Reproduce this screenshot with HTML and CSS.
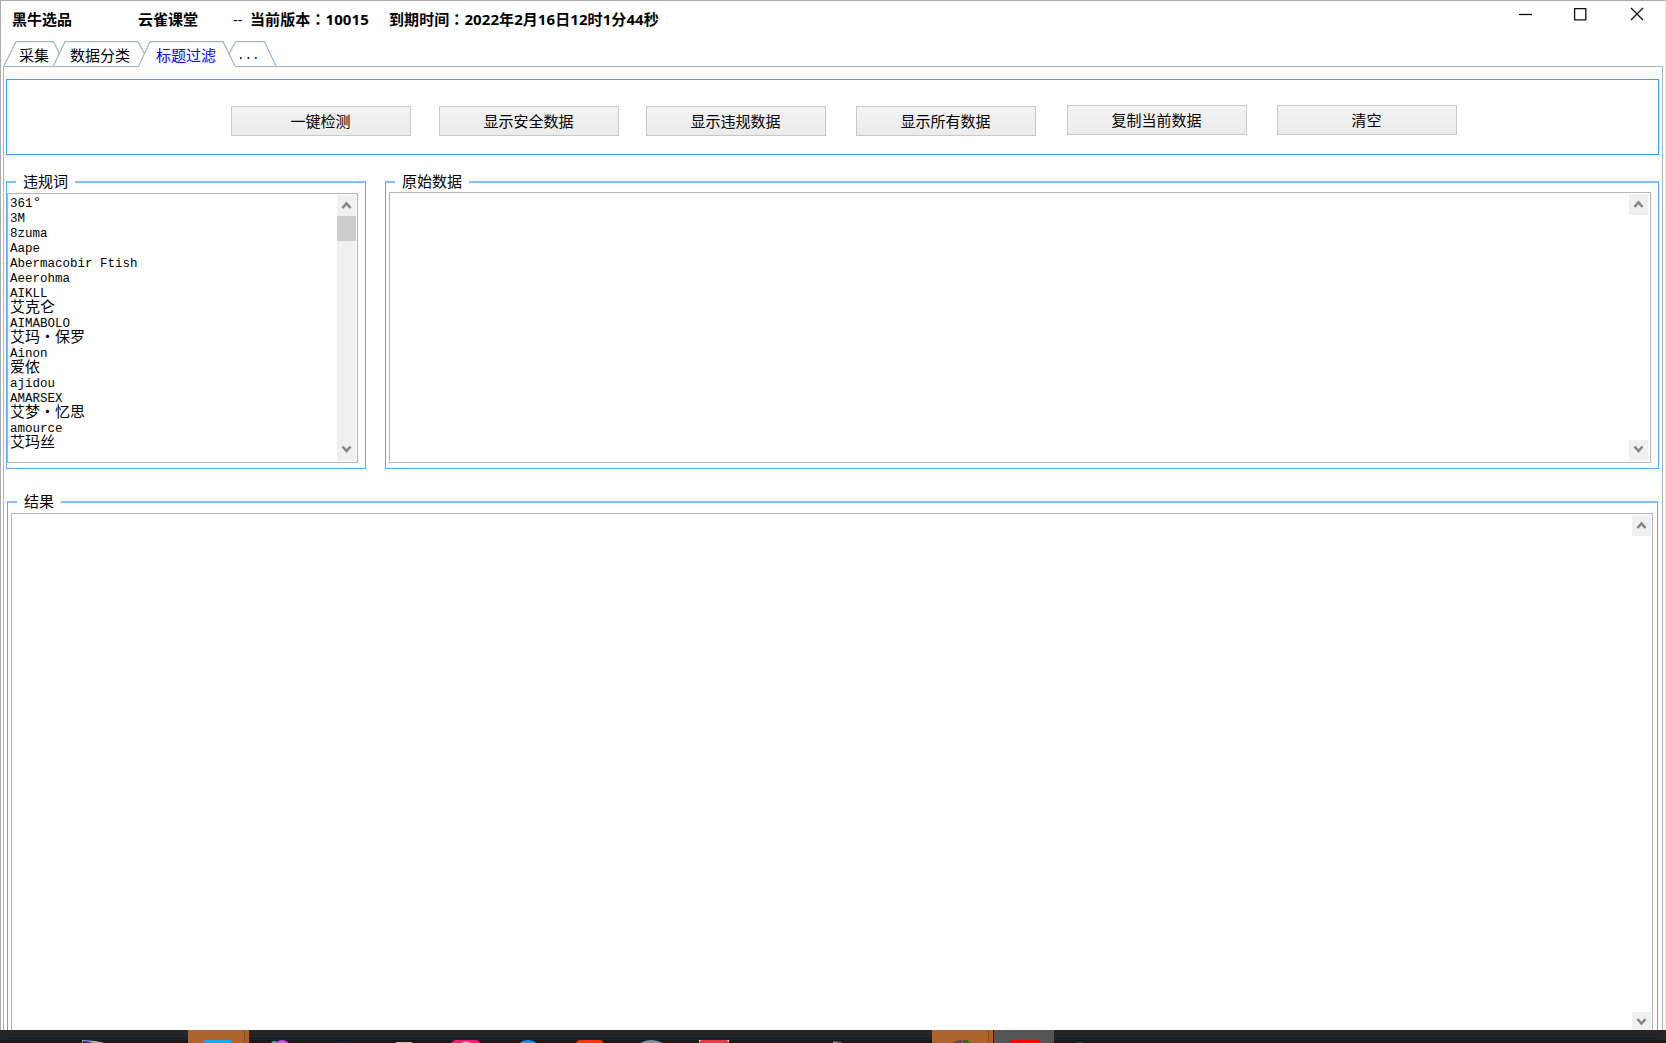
FILE: index.html
```html
<!DOCTYPE html>
<html lang="zh-CN">
<head>
  <meta charset="UTF-8">
  <title>黑牛选品</title>
  <link rel="stylesheet" href="styles.css">
</head>
<body>

  <div class="window">
    <header class="titlebar">
      <span class="app-name">黑牛选品</span>
      <span class="brand">云雀课堂</span>
      <span class="dashes">--</span>
      <span class="version">当前版本<span class="colon" lang="zh-TW">：</span>10015</span>
      <span class="expire">到期时间<span class="colon" lang="zh-TW">：</span>2022年2月16日12时1分44秒</span>
      <svg class="window-buttons" width="132" height="20" viewBox="0 0 132 20">
        <path d="M5 10.5h13" />
        <path d="M60.6 4.6h11.2v11.2H60.6z" />
        <path d="M117 4l12 12M129 4l-12 12" />
      </svg>
    </header>

    <nav class="tabs">
      <svg class="tab-shapes" width="280" height="27" viewBox="0 0 280 27">
        <path d="M3.5 27L16 1.7H53.5L59.5 14" />
        <path d="M53 27L65 1.7H138L144.500 14" />
        <path d="M3 26.5H138.500L150 1.7H223L235.500 27" />
        <path d="M229 14L235.500 1.7H264.500L276.500 27" />
        <path d="M235 26.5H280" />
      </svg>
      <a class="tab tab-collect">采集</a>
      <a class="tab tab-sort">数据分类</a>
      <a class="tab tab-filter active">标题过滤</a>
      <a class="tab tab-more">...</a>
    </nav>

    <main class="page">
      <div class="toolbar">
        <button>一键检测</button>
        <button>显示安全数据</button>
        <button>显示违规数据</button>
        <button>显示所有数据</button>
        <button class="up">复制当前数据</button>
        <button class="up">清空</button>
      </div>

      <div class="row">
        <fieldset class="words">
          <legend>违规词</legend>
          <div class="box">
            <ul>
              <li>361<span class="degree">°</span></li>
              <li>3M</li>
              <li>8zuma</li>
              <li>Aape</li>
              <li>Abermacobir Ftish</li>
              <li>Aeerohma</li>
              <li>AIKLL</li>
              <li class="zh">艾克仑</li>
              <li>AIMABOLO</li>
              <li class="zh">艾玛<span class="dot">·</span>保罗</li>
              <li>Ainon</li>
              <li class="zh">爱侬</li>
              <li>ajidou</li>
              <li>AMARSEX</li>
              <li class="zh">艾梦<span class="dot">·</span>忆思</li>
              <li>amource</li>
              <li class="zh">艾玛丝</li>
            </ul>
            <div class="scroll track">
              <svg class="arrow" viewBox="0 0 19 21"><path d="M5.500 13L9.500 8.500L13.500 13" /></svg>
              <div class="thumb"></div>
              <svg class="arrow down" viewBox="0 0 19 21"><path d="M5.500 6.500L9.500 11L13.500 6.500" /></svg>
            </div>
          </div>
        </fieldset>

        <fieldset class="source">
          <legend>原始数据</legend>
          <div class="box">
            <div class="scroll">
              <svg class="arrow" viewBox="0 0 19 21"><path d="M5.500 13L9.500 8.500L13.500 13" /></svg>
              <svg class="arrow down" viewBox="0 0 19 21"><path d="M5.500 6.500L9.500 11L13.500 6.500" /></svg>
            </div>
          </div>
        </fieldset>
      </div>

      <fieldset class="result">
        <legend>结果</legend>
        <div class="box">
          <div class="scroll">
            <svg class="arrow" viewBox="0 0 19 21"><path d="M5.500 13L9.500 8.500L13.500 13" /></svg>
            <svg class="arrow down" viewBox="0 0 19 21"><path d="M5.500 7L9.500 11.500L13.500 7" /></svg>
          </div>
        </div>
      </fieldset>
    </main>
  </div>

  <!-- top edge of the taskbar, lies over the window -->
  <footer class="taskbar">
    <svg width="1666" height="13" viewBox="0 0 1666 13">
      <path fill="#072035" d="M8 8h1650v1H8z" />
      <path fill="#1c1817" d="M0 10h1666v3H0z" />
      <path fill="#ad632a" d="M188 0h61v13h-61zM932 0h61v13h-61z" />
      <path fill="#8c4c1e" d="M244 0h1v13h-1zM988 0h1v13h-1z" />
      <path fill="#555" d="M994 0h60v13h-60z" />
      <path fill="#aaa" d="M82 10l14 1 9 2H82z" />
      <path fill="#1516b8" d="M83 11l7 1 2 1h-9z" />
      <path fill="#12aaf0" d="M203 13q0-3 3-3h23q3 0 3 3z" />
      <path fill="#28b3d4" d="M271 13l2-2h3v2z" />
      <path fill="#d850f0" d="M275 13q7-6 14 0z" />
      <path fill="#17223c" d="M332 12h18v1h-18z" />
      <path fill="#d2b5ad" d="M396 12h16v1h-16z" />
      <path fill="#fa1c70" d="M451 13q2-3 5-3h20q3 0 4 3z" />
      <path fill="#ffc5d5" d="M461 13q5-3 10 0z" />
      <path fill="#1b8fee" d="M519 13q9-6 18 0z" />
      <path fill="#f83608" d="M576 13q1-3 4-3h19q4 0 4 3z" />
      <path fill="#81939e" d="M640 13q11-6 23 0z" />
      <path fill="#e73b43" d="M699 10h30v3h-30z" />
      <path fill="#fff" d="M699 10h2l-2 2zM729 10h-2l2 2z" />
      <path fill="#261936" d="M771 12h10v1h-10z" />
      <path fill="#777" d="M833 11l8 1 1 1h-9z" />
      <path fill="#534b59" d="M953 13q3-3 9-3v3z" />
      <path fill="#316b18" d="M963 10h4l3 3h-7z" />
      <path fill="#f00" d="M1009 13q1-3 4-3h23q3 0 4 3z" />
      <path fill="#244c32" d="M1078 12h5v1h-5z" />
    </svg>
  </footer>

</body>
</html>
```

FILE: styles.css
```css
* {
  box-sizing: border-box;
}

body {
  margin: 0;
  height: 1043px;
  overflow: hidden;
  background: #fff;
  color: #000;
  font: 15px "Noto Sans CJK SC", sans-serif;
}

.window {
  height: 1043px;
  display: flex;
  flex-direction: column;
  border-top: 1px solid #aaa;
  border-left: 1px solid #aaa;
  border-right: 1px solid #e4e4e4;
}

/* title bar */
.titlebar {
  height: 39px;
  display: flex;
  padding: 7px 0 0 11px;
  font: bold 15px/22px "Open Sans", "Noto Sans CJK SC", sans-serif;
  white-space: nowrap;
}
.app-name { width: 126px; }
.brand { width: 95px; }
.dashes { width: 17px; font-weight: normal; }
.version { width: 139px; letter-spacing: 0.1px; }
.expire { letter-spacing: 0.08px; }
.colon { font-family: "Noto Sans CJK TC", sans-serif; }

.window-buttons {
  margin: -4px 19px 0 auto;
  fill: none;
  stroke: #111;
  stroke-width: 1.3;
}

/* tabs */
.tabs {
  position: relative;
  height: 27px;
  display: flex;
  padding-left: 18px;
  line-height: 30px;
}
.tab-shapes {
  position: absolute;
  left: -1px;
  top: 0;
  fill: none;
  stroke: #a3b7c2;
  stroke-width: 1.2;
}
.tab-collect { width: 51px; }
.tab-sort { width: 86px; }
.tab-filter { width: 81px; }
.tab-more {
  font-family: "Liberation Mono", monospace;
  font-size: 12.5px;
  line-height: 33px;
}
.tab.active { color: #0000ff; }

.page {
  flex: 1;
  display: flex;
  flex-direction: column;
  margin: -1px 2px 0;
  padding: 13px 3px 0 2px;
  border: 1px solid #a3b7c2;
  border-bottom: 0;
  border-top: 0;
  background: linear-gradient(#a3b7c2, #a3b7c2) 272px 0 / 100% 1px no-repeat;
}

/* toolbar */
.toolbar {
  width: 1653px;
  height: 76px;
  display: flex;
  padding: 26px 0 0 224px;
  border: 1px solid #3f9fff;
}
.toolbar button {
  width: 180px;
  height: 30px;
  padding: 0 1px 0 0;
  margin-right: 28px;
  border: 1px solid #c8c8c8;
  background: linear-gradient(#f3f3f3, #ebebeb);
  font: inherit;
  line-height: 20px;
}
.toolbar button:nth-child(2) { margin-right: 27px; }
.toolbar button:nth-child(3) { margin-right: 30px; }
.toolbar button:nth-child(4) { margin-right: 31px; }
.toolbar .up { margin-top: -1px; margin-right: 30px; }

/* group boxes */
.row {
  display: flex;
  gap: 19px;
  margin-top: 16px;
}
fieldset {
  min-width: 0;
  margin: 0;
  padding: 0;
  border: 1px solid #55aaff;
  border-top: 2px solid #7fbfff;
}
legend {
  height: 21px;
  margin-left: 9px;
  padding: 0 7px;
  line-height: 20px;
}
.words { width: 360px; height: 298px; }
.source { width: 1274px; height: 298px; }
.result { width: 1651px; height: 547px; margin: 22px 0 0 1px; }

.box {
  display: flex;
  padding: 1px;
  border: 1px solid #b5b5ba;
}
.words .box { width: 351px; height: 270px; margin-top: 1px; }
.source .box { width: 1262px; height: 271px; margin-left: 3px; }
.result .box { width: 1642px; height: 522px; margin: 1px 0 0 3px; }

ul {
  margin: -2px 0 0 1px;
  padding: 0;
  list-style: none;
}
li {
  height: 15.03px;
  font: 12.5px/23px "Liberation Mono", monospace;
  white-space: pre;
}
li.zh {
  font: 15px/16px "Noto Sans CJK SC", sans-serif;
}
.degree { font-size: 15px; line-height: 1; }
.dot {
  display: inline-block;
  width: 15px;
  text-align: center;
}

/* scrollbars */
.scroll {
  width: 19px;
  display: flex;
  flex-direction: column;
  margin: 0 1px 0 auto;
}
.words .scroll { margin-right: 0; }
.result .scroll { margin-right: 0; }
.track { background: #f0f0f0; }
.arrow {
  width: 19px;
  height: 21px;
  background: #f0f0f0;
  fill: none;
  stroke: #858585;
  stroke-width: 2.6;
}
.down { margin-top: auto; }
.thumb {
  height: 25px;
  background: #cdcdcd;
}

/* taskbar */
.taskbar {
  position: absolute;
  left: 0;
  top: 1030px;
  width: 100%;
  height: 13px;
  background: #252525;
}
.taskbar svg { display: block; }
```
